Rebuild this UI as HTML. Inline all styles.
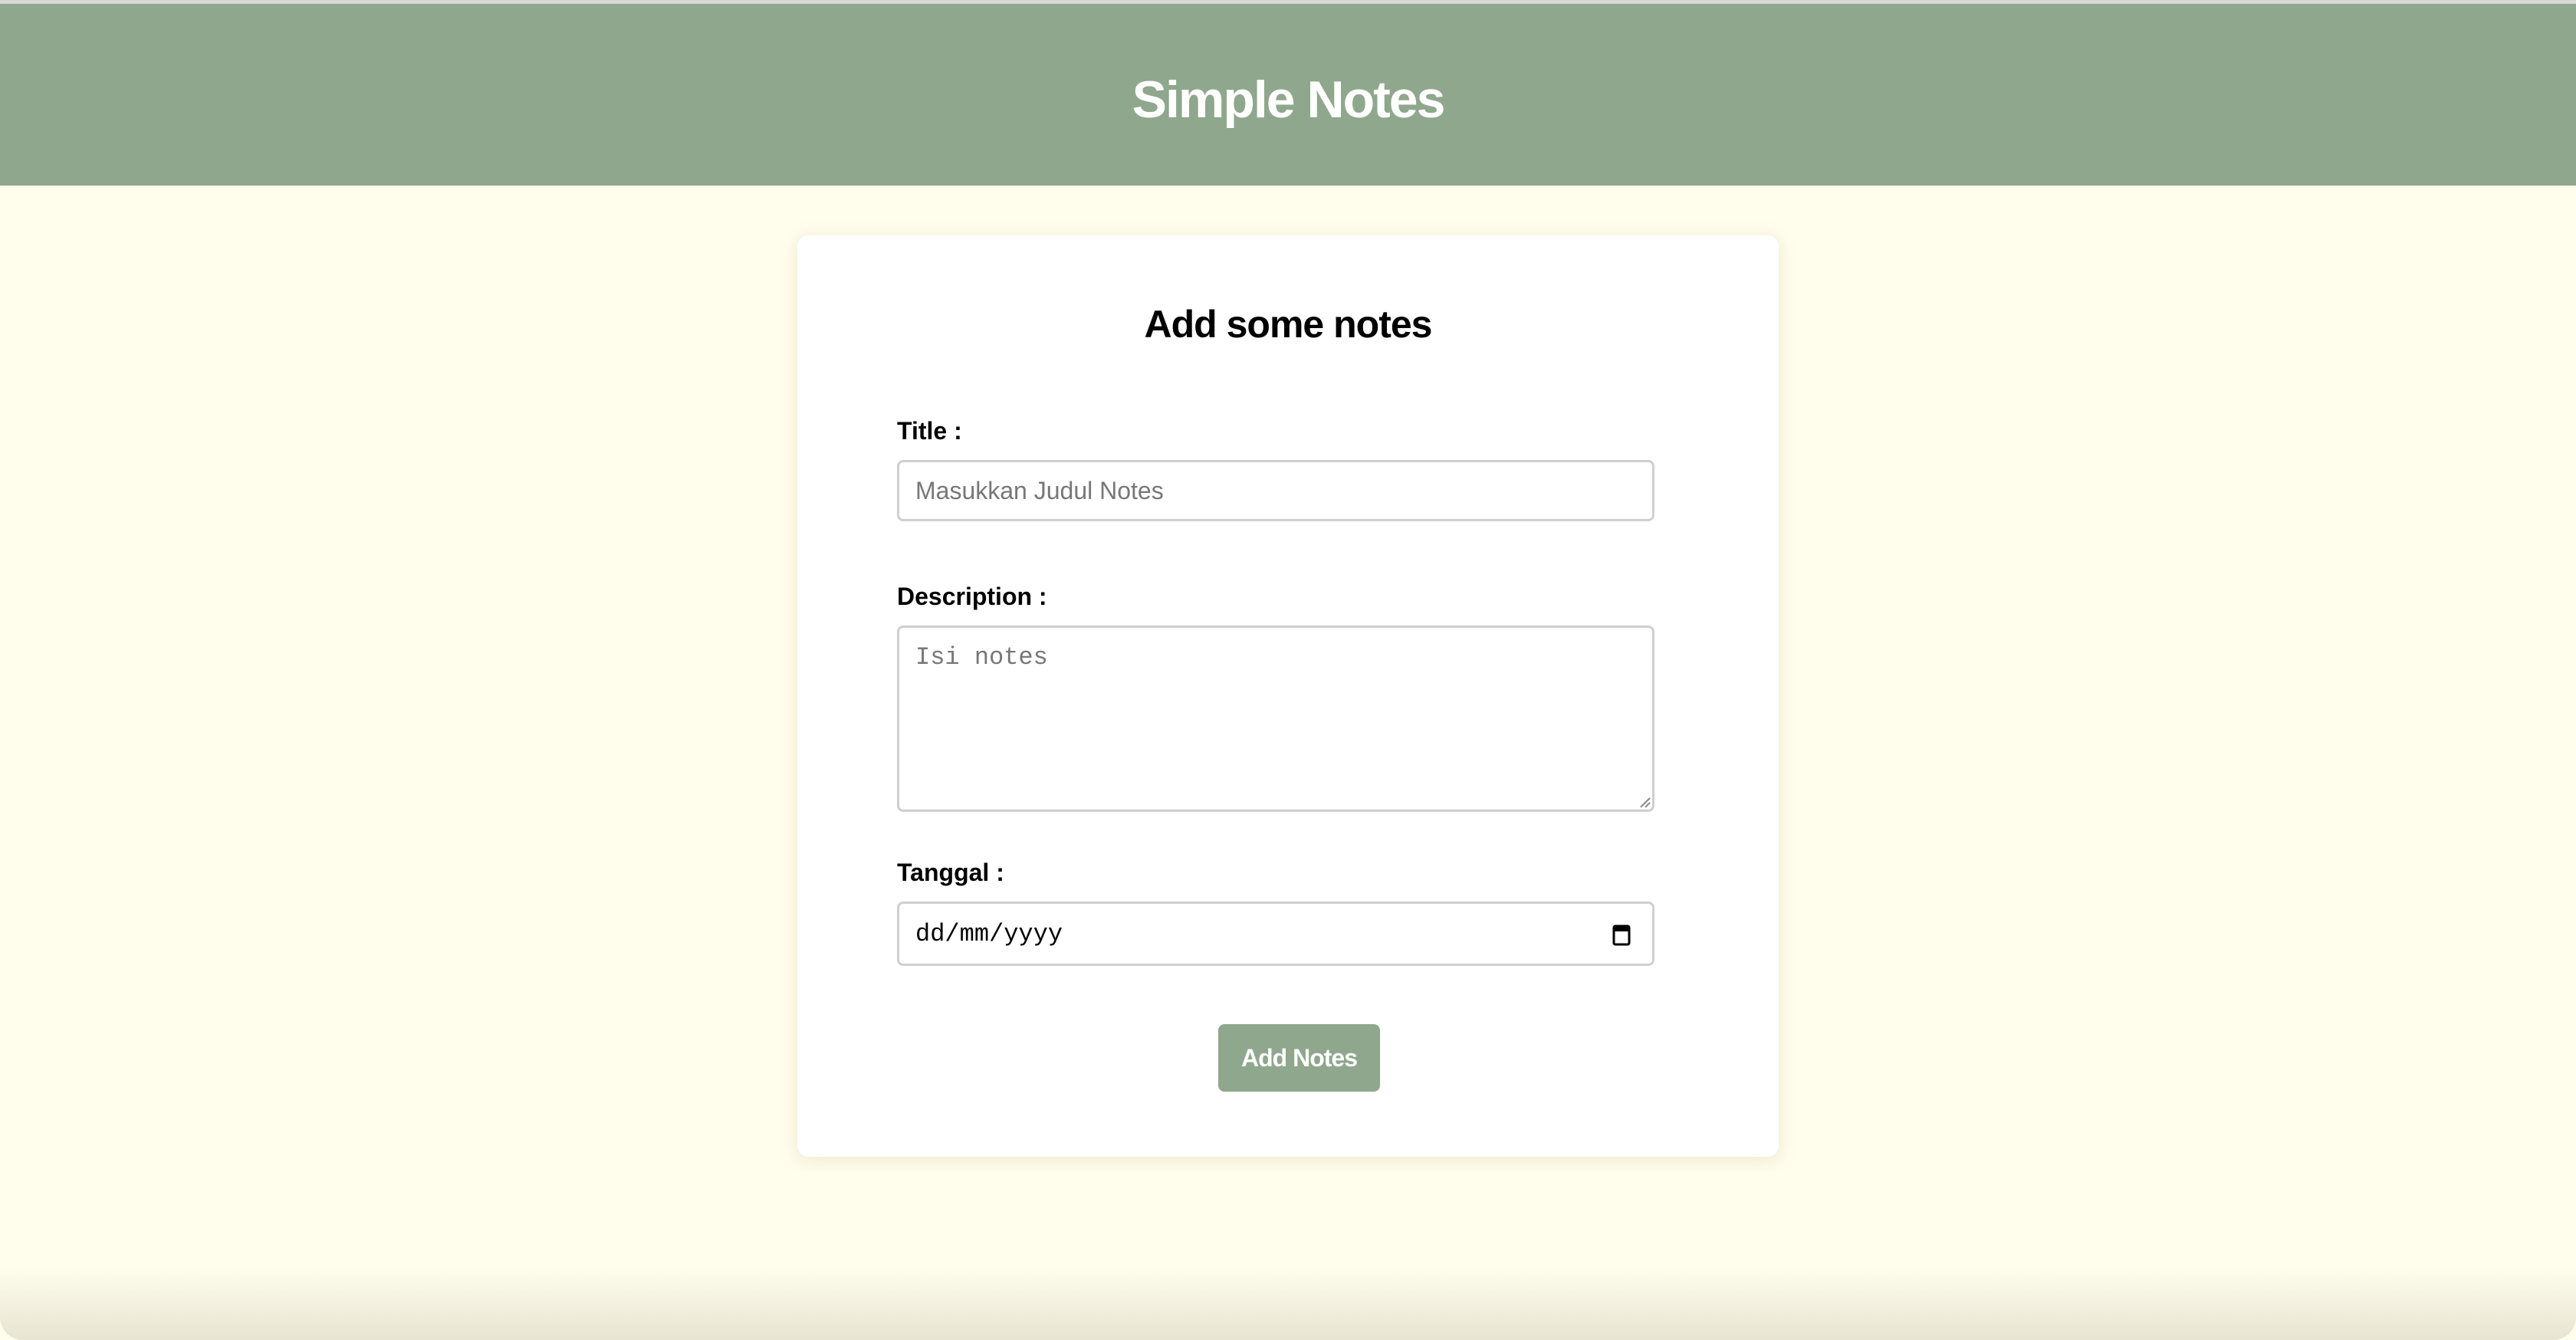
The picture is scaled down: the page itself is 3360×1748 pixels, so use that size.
<!DOCTYPE html>
<html><head><meta charset="utf-8"><style>
*{box-sizing:border-box;margin:0;padding:0}
html,body{width:3360px;height:1748px;overflow:hidden;background:#fffdec;font-family:"Liberation Sans",sans-serif;position:relative}
.top{position:absolute;left:0;top:0;width:3360px;height:5px;background:#d8d8d8}
header{position:absolute;left:0;top:5px;width:3360px;height:237px;background:#8fa78c;text-align:center}
header h1{color:#fff;font-size:68px;font-weight:bold;letter-spacing:-2px;line-height:250px}
.card{position:absolute;left:1040px;top:307px;width:1280px;height:1202px;background:#fff;border-radius:14px;box-shadow:0 4px 22px rgba(180,170,120,.25)}
h2{position:absolute;left:0;width:100%;top:394px;text-align:center;font-size:50px;font-weight:bold;letter-spacing:-1px}
label{position:absolute;left:1170px;font-size:32px;font-weight:bold;letter-spacing:0}
.inp{position:absolute;left:1170px;width:988px;border:3px solid #cfcfcf;border-radius:8px;background:#fff}
.ph{position:absolute;left:21px;color:#777;font-size:32px}
.btn{position:absolute;left:1589px;top:1336px;width:211px;height:88px;background:#8fa78c;border-radius:8px;color:#fff;font-size:32px;font-weight:bold;text-align:center;line-height:88px;letter-spacing:-1px}
.shadow{position:absolute;left:0;top:1650px;width:3360px;height:98px;background:linear-gradient(to bottom,rgba(0,0,0,0),rgba(60,60,20,.12));border-bottom-left-radius:30px;border-bottom-right-radius:30px}
</style></head><body>
<div class="top"></div>
<header><h1>Simple Notes</h1></header>
<div class="card"></div>
<h2>Add some notes</h2>
<label style="top:544px">Title :</label>
<div class="inp" style="top:600px;height:80px"><span class="ph" style="top:19px;font-family:'Liberation Sans',sans-serif">Masukkan Judul Notes</span></div>
<label style="top:760px">Description :</label>
<div class="inp" style="top:816px;height:243px"><span class="ph" style="top:20px;font-family:'Liberation Mono',monospace">Isi notes</span>
<svg style="position:absolute;right:2px;bottom:2px" width="16" height="16"><path d="M15 3L3 15M15 9L9 15" stroke="#888" stroke-width="2"/></svg></div>
<label style="top:1120px">Tanggal :</label>
<div class="inp" style="top:1176px;height:84px"><span class="ph" style="top:21px;color:#000;font-family:'Liberation Mono',monospace">dd/mm/yyyy</span>
<svg style="position:absolute;right:28px;top:25px" width="24" height="30" viewBox="0 0 24 30"><rect x="2" y="4" width="20" height="24" rx="2" fill="none" stroke="#000" stroke-width="3"/><rect x="2" y="4" width="20" height="7" fill="#000"/></svg></div>
<div class="btn">Add Notes</div>
<div class="shadow"></div>
</body></html>
